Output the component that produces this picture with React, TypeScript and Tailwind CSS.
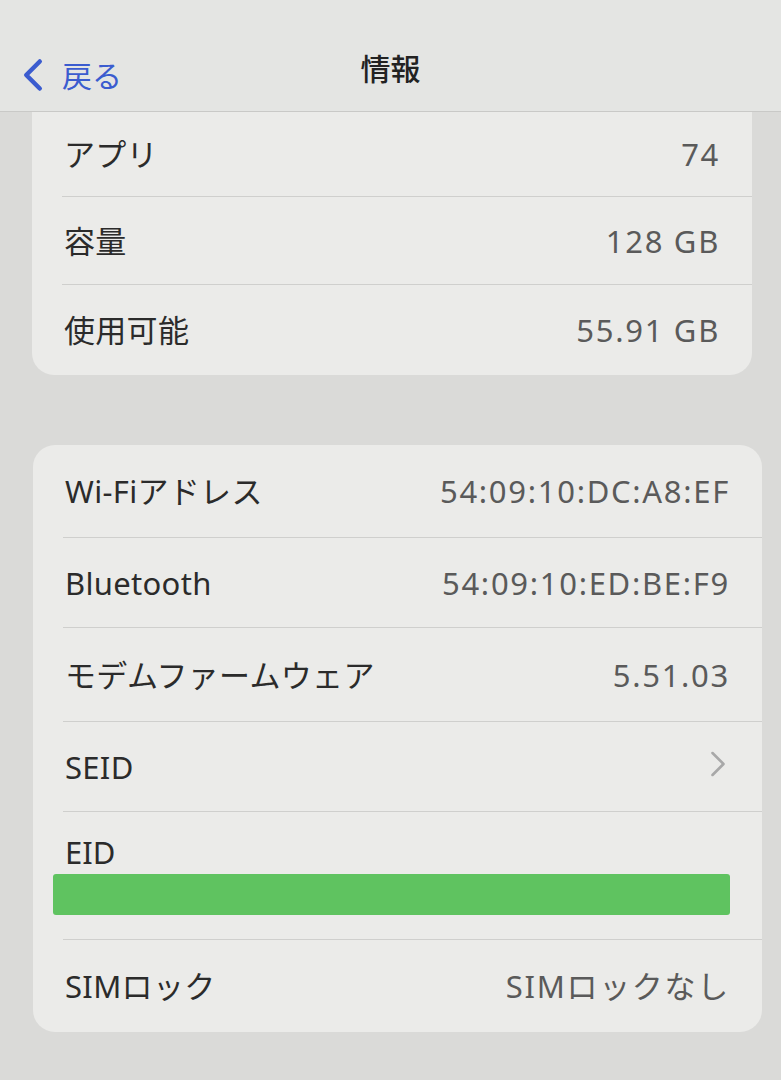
import { ChevronLeft, ChevronRight } from 'lucide-react';

interface Row {
  label: string;
  value?: string;
  chevron?: boolean;
  h: string;
}

const storageRows: Row[] = [
  { label: 'アプリ', value: '74', h: 'h-[85px]' },
  { label: '容量', value: '128 GB', h: 'h-[88px]' },
  { label: '使用可能', value: '55.91 GB', h: 'h-[90px]' },
];

const networkRows: Row[] = [
  { label: 'Wi-Fiアドレス', value: '54:09:10:DC:A8:EF', h: 'h-[93px]' },
  { label: 'Bluetooth', value: '54:09:10:ED:BE:F9', h: 'h-[90px]' },
  { label: 'モデムファームウェア', value: '5.51.03', h: 'h-[94px]' },
  { label: 'SEID', chevron: true, h: 'h-[90px]' },
];

function InfoRow({ row, last }: { row: Row; last?: boolean }) {
  return (
    <div className={`relative flex items-center justify-between pl-[32px] pr-[32px] ${row.h}`}>
      <span className="text-[31px] tracking-[0.01em] text-[#2b2b2b]">{row.label}</span>
      {row.value && (
        <span className="text-[31px] tracking-[0.055em] text-[#5a5a5a]">{row.value}</span>
      )}
      {row.chevron && (
        <ChevronRight className="-mr-[10px] -mt-[6px] h-[44px] w-[44px] text-[#a8a8a8]" strokeWidth={1.4} />
      )}
      {!last && <div className="absolute bottom-0 left-[30px] right-0 h-px bg-[#cfcfcd]" />}
    </div>
  );
}

export default function App() {
  return (
    <div
      className="h-[1080px] w-[781px] overflow-hidden bg-[#dadad8]"
      style={{ fontFamily: '"Noto Sans", "Noto Sans CJK JP", sans-serif' }}
    >
      <div className="relative flex h-[112px] items-center justify-center border-b border-[#c9c9c7] bg-[#e4e5e3] pt-[26px]">
        <div className="absolute left-[6px] top-[48px] flex items-center text-[#3b5ccf]">
          <ChevronLeft className="h-[54px] w-[54px]" strokeWidth={2} />
          <span className="ml-[2px] text-[30px]">戻る</span>
        </div>
        <span className="text-[30px] font-medium text-[#222]">情報</span>
      </div>

      <div className="ml-[32px] w-[720px] rounded-b-[22px] bg-[#ebebe9]">
        {storageRows.map((r, i) => (
          <InfoRow key={r.label} row={r} last={i === storageRows.length - 1} />
        ))}
      </div>

      <div className="ml-[33px] mt-[70px] w-[729px] rounded-[22px] bg-[#ebebe9]">
        {networkRows.map((r) => (
          <InfoRow key={r.label} row={r} />
        ))}
        <div className="relative h-[128px] pt-[22px]">
          <div className="pl-[32px] text-[31px] leading-[36px] text-[#2b2b2b]">EID</div>
          <div className="ml-[20px] mt-[4px] h-[41px] w-[677px] rounded-[3px] bg-[#5fc360]" />
          <div className="absolute bottom-0 left-[30px] right-0 h-px bg-[#cfcfcd]" />
        </div>
        <InfoRow row={{ label: 'SIMロック', value: 'SIMロックなし', h: 'h-[92px]' }} last />
      </div>
    </div>
  );
}
